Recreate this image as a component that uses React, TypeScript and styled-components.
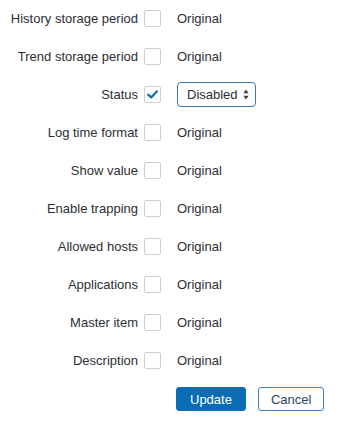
import styled, { createGlobalStyle } from "styled-components";

const GlobalStyle = createGlobalStyle`
  html, body {
    margin: 0;
    padding: 0;
    background: #ffffff;
  }
  body {
    font-family: "Liberation Sans", Arial, sans-serif;
    font-size: 13px;
    color: #2b2f33;
  }
`;

const rows = [
  { label: "History storage period", checked: false },
  { label: "Trend storage period", checked: false },
  { label: "Status", checked: true, select: "Disabled" },
  { label: "Log time format", checked: false },
  { label: "Show value", checked: false },
  { label: "Enable trapping", checked: false },
  { label: "Allowed hosts", checked: false },
  { label: "Applications", checked: false },
  { label: "Master item", checked: false },
  { label: "Description", checked: false },
];

export default function App() {
  return (
    <>
      <GlobalStyle />
      <Form>
        {rows.map((row) => (
          <Row key={row.label}>
            <Label>{row.label}</Label>
            <Checkbox checked={row.checked}>
              {row.checked && (
                <svg width="11" height="9" viewBox="0 0 11 9">
                  <path d="M1.2 4.6 L4.2 7.4 L9.8 1.4" fill="none" stroke="#0a6db3" strokeWidth="2.2" strokeLinecap="round" strokeLinejoin="round" />
                </svg>
              )}
            </Checkbox>
            {row.select ? (
              <Select>
                <span>{row.select}</span>
                <svg width="6" height="11" viewBox="0 0 6 11">
                  <path d="M3 0.5 L5.6 4.2 L0.4 4.2 Z" fill="#3a3f44" />
                  <path d="M3 10.5 L5.6 6.8 L0.4 6.8 Z" fill="#3a3f44" />
                </svg>
              </Select>
            ) : (
              <Value>Original</Value>
            )}
          </Row>
        ))}
        <Buttons>
          <Button primary>Update</Button>
          <Button>Cancel</Button>
        </Buttons>
      </Form>
    </>
  );
}

const Form = styled.div`
  width: 337px;
  display: grid;
  grid-template-columns: 144px 17px 1fr;
  grid-auto-rows: 38px;
  margin-top: -1px;
`;

const Row = styled.div`
  display: contents;
`;

const Label = styled.div`
  display: flex;
  align-items: center;
  justify-content: flex-end;
  padding-right: 6px;
  white-space: nowrap;
  color: #2b2f33;
`;

const Checkbox = styled.div<{ checked: boolean }>`
  align-self: center;
  width: 17px;
  height: 17px;
  box-sizing: border-box;
  border: 1px solid #c9d1d8;
  border-radius: 2px;
  background: #ffffff;
  display: flex;
  align-items: center;
  justify-content: center;
`;

const Value = styled.div`
  display: flex;
  align-items: center;
  padding-left: 16px;
  color: #2b2f33;
`;

const Select = styled.div`
  align-self: center;
  justify-self: start;
  margin-left: 16px;
  width: 79px;
  height: 25px;
  box-sizing: border-box;
  border: 1px solid #3b77ad;
  border-radius: 4px;
  padding: 0 6px 0 9px;
  display: flex;
  align-items: center;
  justify-content: space-between;
  color: #2b2f33;
  background: #ffffff;
`;

const Buttons = styled.div`
  grid-column: 3;
  display: flex;
  gap: 12px;
  padding-left: 15px;
  align-items: center;
  margin-top: 2px;
`;

const Button = styled.button<{ primary?: boolean }>`
  height: 24px;
  padding: 0 ${(p) => (p.primary ? "13px" : "12px")};
  font-family: "Liberation Sans", Arial, sans-serif;
  font-size: 13px;
  border-radius: 3px;
  cursor: pointer;
  border: 1px solid ${(p) => (p.primary ? "#0a6db3" : "#3b82c0")};
  background: ${(p) => (p.primary ? "#0a6db3" : "#ffffff")};
  color: ${(p) => (p.primary ? "#ffffff" : "#2a4560")};
`;
